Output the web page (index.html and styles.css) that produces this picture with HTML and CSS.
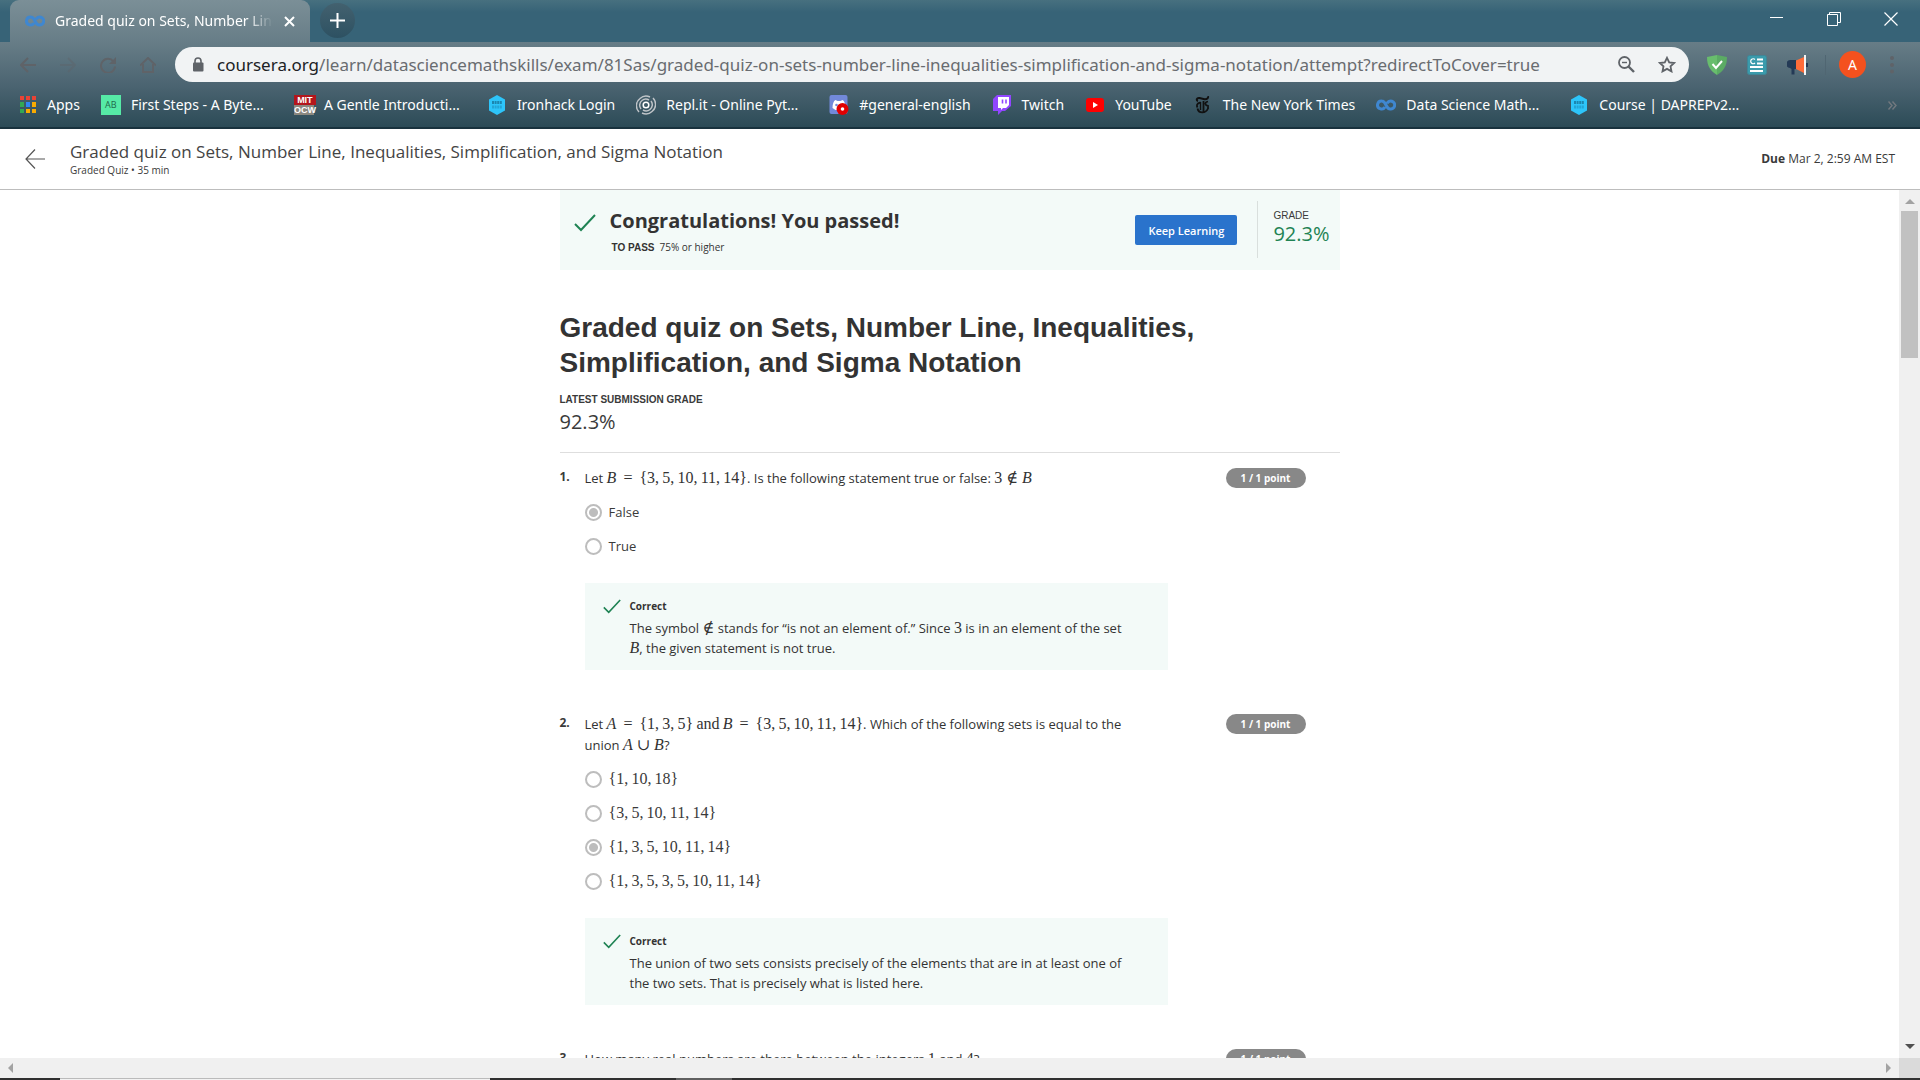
FILE: index.html
```html
<!DOCTYPE html>
<html lang="en">
<head>
<meta charset="utf-8">
<title>Graded quiz on Sets, Number Line, Inequalities, Simplification, and Sigma Notation</title>
<link rel="stylesheet" href="styles.css">
</head>
<body>
<svg class="defs" aria-hidden="true">
  <symbol id="check" viewBox="0 0 22 18"><path d="M1 10l6 6L21 1" fill="none" stroke="#1f8354" stroke-width="2"/></symbol>
  <symbol id="infinity" viewBox="0 0 20 12"><path d="M11 4.500A4 4 0 1 1 14.200 10C9.500 10 10.500 2 5.800 2a4 4 0 1 0 3.200 6" fill="none" stroke="#3f87d0" stroke-width="3"/></symbol>
  <symbol id="hexagon" viewBox="0 0 20 20"><path d="M10 0l8 4.500v11L10 20l-8-4.500v-11z" fill="#2dc5fa"/><path d="M5 7.500h10" stroke="#1b86b0" stroke-width="3" stroke-dasharray="2 .6"/><path d="M5 12h10" stroke="#23a5d6" stroke-width="3" stroke-dasharray="2 .6"/></symbol>
</svg>
<header class="browser">
  <div class="tab-strip">
    <div class="tab">
      <svg class="tab-icon" width="20" height="12"><use href="#infinity"/></svg>
      <span class="tab-title">Graded quiz on Sets, Number Line</span>
      <button class="tab-close" aria-label="Close tab"><svg width="11" height="11" viewBox="0 0 11 11"><path d="M1 1l9 9M10 1l-9 9" stroke="#fff" stroke-width="2"/></svg></button>
    </div>
    <button class="new-tab" aria-label="New tab"><svg width="15" height="15" viewBox="0 0 15 15"><path d="M7.500 0v15M0 7.500h15" stroke="#fff" stroke-width="2"/></svg></button>
    <div class="window-controls">
      <button aria-label="Minimize"><svg width="14" height="14" viewBox="0 0 14 14"><path d="M0 5.500h13" stroke="#fff"/></svg></button>
      <button aria-label="Restore"><svg width="14" height="14" viewBox="0 0 14 14"><path d="M.5 2.500h10v11H.5zM2.500 2.500v-2h11v10h-3" fill="none" stroke="#fff"/></svg></button>
      <button aria-label="Close"><svg width="14" height="14" viewBox="0 0 14 14"><path d="M.5 .5l13 13M13.500 .5l-13 13" stroke="#fff" stroke-width="1.200"/></svg></button>
    </div>
  </div>
  <div class="toolbar">
    <div class="nav-buttons">
      <button aria-label="Back"><svg width="16" height="16" viewBox="0 0 16 16"><path d="M16 8H1M8 1L1 8l7 7" fill="none" stroke="#5f6368" stroke-width="2"/></svg></button>
      <button aria-label="Forward" class="dim"><svg width="16" height="16" viewBox="0 0 16 16"><path d="M0 8h15M8 1l7 7-7 7" fill="none" stroke="#5f6368" stroke-width="2"/></svg></button>
      <button aria-label="Reload"><svg width="16" height="16" viewBox="0 0 16 16"><path d="M13.500 4.500A7 7 0 1 0 15 9.500" fill="none" stroke="#5f6368" stroke-width="2"/><path d="M16 0v7H9z" fill="#5f6368"/></svg></button>
      <button aria-label="Home"><svg width="16" height="16" viewBox="0 0 16 16"><path d="M0 8.500L8 1l8 7.500M3 7v8h10V7" fill="none" stroke="#5f6368" stroke-width="2"/></svg></button>
    </div>
    <div class="omnibox">
      <svg width="12" height="15" viewBox="0 0 12 15"><path d="M3 6V4a3 3 0 0 1 6 0v2" fill="none" stroke="#5f6368" stroke-width="1.600"/><rect x="1" y="5.500" width="10.500" height="9" rx="1" fill="#5f6368"/></svg>
      <span class="url"><b>coursera.org</b>/learn/datasciencemathskills/exam/81Sas/graded-quiz-on-sets-number-line-inequalities-simplification-and-sigma-notation/attempt?redirectToCover=true</span>
      <button aria-label="Zoom"><svg width="17" height="17" viewBox="0 0 17 17"><circle cx="6.500" cy="6.500" r="5.500" fill="none" stroke="#5f6368" stroke-width="1.800"/><path d="M4 6.500h5" stroke="#5f6368" stroke-width="1.400"/><path d="M10.500 10.500l5.500 5.500" stroke="#5f6368" stroke-width="2.400"/></svg></button>
      <button aria-label="Bookmark"><svg width="18" height="17" viewBox="0 0 18 17"><path d="M9 1.800l2.200 4.600 5 .6-3.700 3.400 1 5L9 12.900l-4.500 2.500 1-5L1.800 7l5-.6z" fill="none" stroke="#5f6368" stroke-width="1.800"/></svg></button>
    </div>
    <div class="extensions">
      <button aria-label="Ad blocker"><svg width="20" height="20" viewBox="0 0 20 20"><path d="M0 2l10-2v20C4 16 0 12 0 2z" fill="#68bd6d"/><path d="M20 2L10 0v20c6-4 10-8 10-18z" fill="#5bab64"/><path d="M5.500 9l3.500 4 6-7" fill="none" stroke="#fff" stroke-width="2"/></svg></button>
      <button aria-label="Citations"><svg width="20" height="20" viewBox="0 0 20 20"><rect x=".5" y=".5" width="19" height="19" rx="2" fill="#3a9bac" stroke="#3f8697"/><path d="M8 4.500a2.500 2.500 0 1 0 0 3.500" fill="none" stroke="#fff" stroke-width="1.200"/><path d="M10 4.500h6M10 8.500h6M3 12h13M3 16h13" stroke="#fff" stroke-width="2"/></svg></button>
      <button aria-label="Announcements"><svg width="21" height="20" viewBox="0 0 21 20"><path d="M9 5H4a4 4 0 0 0-1 8l1.500 1v5.500h3V14H9z" fill="#243a56"/><path d="M9 5.500L17 2v16l-8-4z" fill="#ff6c39"/><path d="M18 0v20" stroke="#f4f4f4" stroke-width="2"/><path d="M20 8v4" stroke="#243a56" stroke-width="2"/></svg></button>
    </div>
    <button class="avatar" aria-label="Profile">A</button>
    <button class="menu" aria-label="Menu"><svg width="4" height="18" viewBox="0 0 4 18"><g fill="#5f6368"><circle cx="2" cy="2" r="2"/><circle cx="2" cy="9" r="2"/><circle cx="2" cy="15.500" r="2"/></g></svg></button>
  </div>
  <nav class="bookmarks" aria-label="Bookmarks">
    <a href="#" class="apps"><svg width="17" height="18" viewBox="0 0 17 18"><g fill="#ea4335"><path d="M0 0h4v4H0zM6 0h4v4H6zM12 0h4v4h-4z"/></g><path d="M0 6h4v5H0zM0 13h4v4H0z" fill="#34a853"/><path d="M6 6h4v5H6z" fill="#2f86f5"/><path d="M12 6h4v5h-4zM6 13h4v4H6zM12 13h4v4h-4z" fill="#f9ab00"/></g></svg><span>Apps</span></a>
    <a href="#" class="long"><i class="ab">AB</i><span>First Steps - A Byte...</span></a>
    <a href="#" class="long"><i class="mit"><b>MIT</b><b>OCW</b></i><span>A Gentle Introducti...</span></a>
    <a href="#"><svg width="20" height="20"><use href="#hexagon"/></svg><span>Ironhack Login</span></a>
    <a href="#" class="long"><svg width="20" height="20" viewBox="0 0 20 20" fill="none" stroke="#bfc4c8" stroke-width="1.500"><circle cx="10" cy="10" r="2.800" stroke="#fff"/><path d="M3 17A9 9 0 0 1 4 3.500 9 9 0 0 1 14 2M17 3A9 9 0 0 1 16 16.500 9 9 0 0 1 6 18M5 14a6 6 0 0 1 1-8.500 6 6 0 0 1 7-.5M15 6a6 6 0 0 1-1 8.500 6 6 0 0 1-7 .5"/></svg><span>Repl.it - Online Pyt...</span></a>
    <a href="#"><svg width="20" height="20" viewBox="0 0 19 20"><rect width="18" height="19" rx="2" fill="#7289da"/><path d="M3 13c0-4 1-7 3-8l2 1h3l2-1c2 1 3 4 3 8l-3 2H6z" fill="#fff"/><circle cx="7" cy="10" r="1.300" fill="#7289da"/><circle cx="13" cy="14" r="6" fill="#e00000"/><circle cx="13" cy="14" r="1.800" fill="#fff"/></svg><span>#general-english</span></a>
    <a href="#"><svg width="20" height="20" viewBox="0 0 18 20"><path d="M4 0h14v11l-6 5H9l-4 4v-4H0V4z" fill="#9146ff"/><path d="M5 2h11v8l-3 3h-3l-2 2v-2H5z" fill="#fff"/><path d="M9.500 4.500v4M13 4.500v4" stroke="#9146ff" stroke-width="1.600"/></svg><span>Twitch</span></a>
    <a href="#"><svg width="20" height="14" viewBox="0 0 18 14"><rect width="18" height="14" rx="3" fill="#f00"/><path d="M7 4l5 3-5 3z" fill="#fff"/></svg><span>YouTube</span></a>
    <a href="#"><svg width="20" height="18" viewBox="0 0 17 18" fill="none" stroke="#111"><path d="M3.500 5C1.500 4.500 2 1.500 5 2l5 1.200c2.500.3 4-1 3.500-3" stroke-width="2"/><path d="M6 6.500C2 7 2 10 3 11.500M3 12.500c1 5 8 5.500 10.500 0M9 5v12M13.500 5.500c-4 1-3 4 0 4.500v3" stroke-width="1.800"/><path d="M6 6v8" stroke-width="1.400"/></svg><span>The New York Times</span></a>
    <a href="#" class="long"><svg width="20" height="12"><use href="#infinity"/></svg><span>Data Science Math...</span></a>
    <a href="#"><svg width="20" height="20"><use href="#hexagon"/></svg><span>Course | DAPREPv2...</span></a>
    <button class="more" aria-label="More bookmarks"><svg width="9" height="9" viewBox="0 0 9 9"><path d="M.5 .5l3.500 4-3.500 4M4.500 .5l3.500 4-3.500 4" fill="none" stroke="#73797f" stroke-width="1.400"/></svg></button>
  </nav>
</header>
<header class="quiz-bar">
  <a href="#" class="back" aria-label="Back"><svg width="20" height="20" viewBox="0 0 20 20"><path d="M20 10H1M10 .5L1 10l9 9.500" fill="none" stroke="#555" stroke-width="1.200"/></svg></a>
  <div class="quiz-name">
    <div class="name">Graded quiz on Sets, Number Line, Inequalities, Simplification, and Sigma Notation</div>
    <div class="kind">Graded Quiz • 35 min</div>
  </div>
  <div class="due"><b>Due</b> Mar 2, 2:59 AM EST</div>
</header>
<div class="viewport">
  <main class="page">
    <div class="column">
      <section class="banner">
        <svg class="banner-check" width="22" height="18"><use href="#check"/></svg>
        <div class="result">
          <h2>Congratulations! You passed!</h2>
          <p><b>TO PASS</b>75% or higher</p>
        </div>
        <button class="keep">Keep Learning</button>
        <div class="grade"><span class="caption">GRADE</span><span class="score">92.3%</span></div>
      </section>
      <h1>Graded quiz on Sets, Number Line, Inequalities, Simplification, and Sigma Notation</h1>
      <div class="caption strong">LATEST SUBMISSION GRADE</div>
      <div class="latest">92.3%</div>
      <section class="question">
        <div class="number">1.</div>
        <div class="body">
          <p class="prompt">Let <span class="math"><i>B</i> <span class="rel">=</span> {3,&thinsp;5,&thinsp;10,&thinsp;11,&thinsp;14}</span>. Is the following statement true or false: <span class="math">3 ∉ <i>B</i></span></p>
          <label><input type="radio" name="q1" checked>False</label>
          <label><input type="radio" name="q1">True</label>
          <div class="feedback">
            <svg width="18" height="15"><use href="#check"/></svg>
            <div><h3>Correct</h3><p>The symbol <span class="math">∉</span> stands for “is not an element of.” Since <span class="math">3</span> is in an element of the set <span class="math"><i>B</i></span>, the given statement is not true.</p></div>
          </div>
        </div>
        <span class="points">1 / 1 point</span>
      </section>
      <section class="question">
        <div class="number">2.</div>
        <div class="body">
          <p class="prompt">Let <span class="math"><i>A</i> <span class="rel">=</span> {1,&thinsp;3,&thinsp;5}&thinsp;and&thinsp;<i>B</i> <span class="rel">=</span> {3,&thinsp;5,&thinsp;10,&thinsp;11,&thinsp;14}</span>. Which of the following sets is equal to the union <span class="math"><i>A</i> ∪ <i>B</i></span>?</p>
          <label><input type="radio" name="q2"><span class="math">{1,&thinsp;10,&thinsp;18}</span></label>
          <label><input type="radio" name="q2"><span class="math">{3,&thinsp;5,&thinsp;10,&thinsp;11,&thinsp;14}</span></label>
          <label><input type="radio" name="q2" checked><span class="math">{1,&thinsp;3,&thinsp;5,&thinsp;10,&thinsp;11,&thinsp;14}</span></label>
          <label><input type="radio" name="q2"><span class="math">{1,&thinsp;3,&thinsp;5,&thinsp;3,&thinsp;5,&thinsp;10,&thinsp;11,&thinsp;14}</span></label>
          <div class="feedback">
            <svg width="18" height="15"><use href="#check"/></svg>
            <div><h3>Correct</h3><p>The union of two sets consists precisely of the elements that are in at least one of the two sets. That is precisely what is listed here.</p></div>
          </div>
        </div>
        <span class="points">1 / 1 point</span>
      </section>
      <section class="question">
        <div class="number">3.</div>
        <div class="body"><p class="prompt">How many real numbers are there between the integers <span class="math">1</span> and <span class="math">4</span>?</p></div>
        <span class="points">1 / 1 point</span>
      </section>
    </div>
  </main>
  <div class="scroll-y"><i class="arrow up"></i><i class="thumb"></i><i class="arrow down"></i></div>
  <div class="scroll-x"><i class="arrow left"></i><i class="arrow right"></i></div>
  <div class="corner"></div>
</div>
<div class="taskbar"><i class="search"></i><i class="active"></i></div>
</body>
</html>
```
FILE: styles.css
```css
* { box-sizing: border-box; }
body {
  margin: 0;
  height: 100vh;
  display: flex;
  flex-direction: column;
  overflow: hidden;
  font-family: "Open Sans", "Noto Sans", sans-serif;
  font-size: 13px;
  color: #3a3a3a;
  background: #fff;
}
button { border: 0; padding: 0; background: none; font-family: inherit; display: flex; align-items: center; justify-content: center; }
a { color: inherit; text-decoration: none; }
h1, h2, h3, p { margin: 0; color: #333; }
svg { flex: none; display: block; }
.defs { display: none; }

/* Browser chrome */
.browser { flex: none; font-family: "Noto Sans", "Open Sans", sans-serif; color: #fff; background: linear-gradient(#47707f, #376377 12px, #376377 42px, #2c4b57 42px); }
.tab-strip { height: 42px; display: flex; align-items: flex-start; padding: 0 1px 0 10px; }
.tab { width: 300px; height: 42px; display: flex; align-items: center; padding: 0 15px; border-radius: 9px 9px 0 0; background: linear-gradient(#7b8f97, #677d87); }
.tab-title { flex: 1; margin: 0 11px 0 10px; font-size: 14px; line-height: 20px; overflow: hidden; white-space: nowrap; mask-image: linear-gradient(90deg, #000 88%, transparent); }
.new-tab { width: 35px; height: 35px; margin: 3px 0 0 10px; border-radius: 50%; background: linear-gradient(#43616f, #2d5162); }
.window-controls { margin-left: auto; display: flex; }
.window-controls button { width: 57px; height: 37px; }
.toolbar { height: 45px; display: flex; align-items: center; padding: 0 26px 0 20px; background: linear-gradient(#677d87, #4a6370); }
.nav-buttons { display: flex; gap: 24px; margin-right: 19px; }
.dim { opacity: .4; }
.omnibox { flex: 1; height: 35px; display: flex; align-items: center; border-radius: 18px; padding: 0 13px 0 17px; gap: 23px; background: #f1f3f4; }
.url { flex: 1; margin-left: -10px; font-size: 17px; line-height: 24px; color: #696c70; white-space: nowrap; overflow: hidden; }
.url b { font-weight: 400; color: #202124; }
.extensions { display: flex; gap: 20px; padding-right: 17px; margin-left: 18px; border-right: 1px solid #506672; }
.avatar { width: 27px; height: 27px; margin-left: 13px; border-radius: 50%; background: #f4511e; color: #fff; font-size: 14px; }
.menu { margin-left: 24px; }
.bookmarks { height: 42px; display: flex; align-items: center; gap: 21px; padding: 0 23px 4px 20px; font-size: 14px; line-height: 20px; white-space: nowrap; background: linear-gradient(#4a6370, #2c4b57); border-bottom: 2px solid #19323e; }
.bookmarks a { display: flex; align-items: center; gap: 10px; }
.bookmarks .long { width: 172px; }
.ab { width: 20px; height: 20px; background: #56eaa6; color: #246c4d; font-size: 9px; font-style: normal; text-align: center; }
.mit { width: 20px; height: 20px; display: grid; background: #8b8880; font-style: normal; font-family: "Liberation Sans", sans-serif; font-size: 9px; line-height: 10px; text-align: center; }
.mit b:first-child { background: #b3161c; }
.more { margin-left: auto; }

/* Quiz title bar */
.quiz-bar { flex: none; height: 61px; display: flex; align-items: center; padding: 0 25px; border-bottom: 1px solid #bdbdbd; }
.quiz-name { margin: 0 auto 0 25px; }
.name { font-size: 17px; line-height: 22px; color: #444; }
.kind { font-size: 10px; line-height: 14px; }
.due { font-size: 12px; line-height: 16px; }

/* Scrolling page */
.viewport { flex: 1; min-height: 0; display: grid; grid-template: minmax(0, 1fr) 20px / minmax(0, 1fr) 21px; }
.page { overflow: hidden; }
.column { max-width: 780px; margin: 0 auto; }
.banner { height: 80px; display: flex; align-items: flex-start; padding: 11px 10px 0 14px; background: #f3faf8; }
.banner-check { margin-top: 13px; }
.result { flex: 1; padding-left: 14px; }
h2 { font-size: 20px; line-height: 40px; font-weight: 700; }
.result p { font-size: 10px; line-height: 12px; padding-left: 2px; }
.result b { margin-right: 5px; font-family: "Liberation Sans", sans-serif; }
.keep { width: 102px; height: 30px; margin: 14px 20px 0 0; border-radius: 2px; background: #2a73cc; color: #fff; font-size: 11px; font-weight: 600; }
.grade { height: 57px; border-left: 1px solid #d9dfdd; padding: 9px 0 0 15px; display: flex; flex-direction: column; }
.caption { font-size: 10px; line-height: 12px; font-family: "Liberation Sans", sans-serif; }
.strong { font-weight: 700; }
.score { font-size: 20px; line-height: 24px; color: #1f8354; }
h1 { margin: 40px 0 14px; font-family: "Liberation Sans", sans-serif; font-size: 28px; line-height: 35px; }
.latest { font-size: 20px; line-height: 32px; padding-bottom: 14px; border-bottom: 1px solid #dedede; }
.question { display: flex; align-items: flex-start; padding: 15px 34px 29px 0; }
.number { width: 25px; font-size: 12px; font-weight: 700; line-height: 18px; }
.body { width: 583px; }
.prompt { max-width: 560px; line-height: 21px; }
.math { font-family: "Liberation Serif", "DejaVu Serif", serif; font-size: 16px; line-height: 16px; }
.rel { margin: 0 3px; }
.body label { display: flex; align-items: center; height: 34px; gap: 7px; }
.prompt + label { margin-top: 6px; }
input { appearance: none; width: 17px; height: 17px; margin: 0; border: 2px solid #bdbdbd; border-radius: 50%; background: #fff; }
input:checked { background: radial-gradient(circle, #bdbdbd 4px, #fff 5px); }
.feedback { height: 87px; display: flex; gap: 9px; margin-top: 20px; padding: 16px 32px 0 18px; background: #f3faf8; }
.feedback h3 { font-size: 10px; line-height: 14px; margin-bottom: 5px; }
.feedback p { line-height: 20px; }
.points { margin-left: auto; width: 80px; height: 20px; border-radius: 10px; background: #888; color: #fff; font-size: 10px; line-height: 20px; font-weight: 700; text-align: center; }

/* Scrollbars and taskbar */
.scroll-y, .scroll-x { background: #f0f0f0; display: flex; justify-content: space-between; align-items: center; }
.scroll-y { flex-direction: column; padding: 9px 2px; }
.scroll-x { padding: 0 8px; grid-row: 2; }
.thumb { width: 17px; height: 147px; margin: 7px 0 auto; background: #c1c1c1; }
.arrow { border: 5px solid transparent; }
.up { border-bottom-color: #a3a3a3; border-top: 0; }
.down { border-top-color: #505050; border-bottom: 0; }
.left { border-right-color: #a3a3a3; border-left: 0; }
.right { border-left-color: #a3a3a3; border-right: 0; }
.corner { background: #dadada; }
.taskbar { flex: none; height: 2px; display: flex; background: #303030; padding-left: 60px; gap: 186px; }
.search { width: 430px; background: #f2f2f2; border-top: 1px solid #bbb; }
.active { width: 56px; background: #606060; }
```
